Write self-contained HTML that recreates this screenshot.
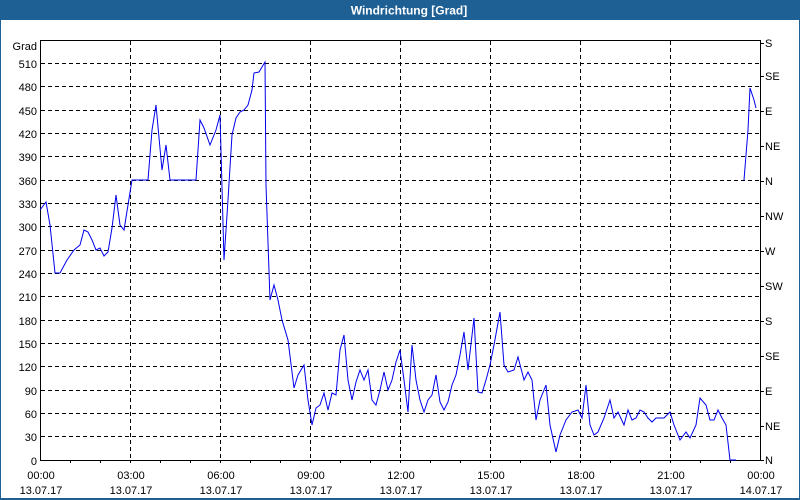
<!DOCTYPE html>
<html><head><meta charset="utf-8"><style>
html,body{margin:0;padding:0;background:#fff;}
body{width:800px;height:500px;overflow:hidden;position:relative;font-family:"Liberation Sans",sans-serif;}
</style></head><body>
<svg width="800" height="500" xmlns="http://www.w3.org/2000/svg" style="position:absolute;left:0;top:0" font-family="Liberation Sans, sans-serif" font-size="11">
<rect x="0" y="0" width="800" height="500" fill="#fff"/>
<rect x="0" y="0" width="800" height="20" fill="#1e5f94"/>
<rect x="0" y="0" width="1" height="500" fill="#1e5f94"/>
<rect x="799" y="0" width="1" height="500" fill="#1e5f94"/>
<rect x="0" y="498" width="800" height="2" fill="#1e5f94"/>
<text x="409" y="14.5" fill="#fff" font-weight="bold" text-anchor="middle" font-size="12">Windrichtung [Grad]</text>
<g stroke="#000" stroke-width="1" stroke-dasharray="4,3" fill="none">
<path d="M130.5 41V460M220.5 41V460M310.5 41V460M400.5 41V460M490.5 41V460M580.5 41V460M670.5 41V460"/>
<path d="M41 63.5H760M41 86.5H760M41 110.5H760M41 133.5H760M41 156.5H760M41 180.5H760M41 203.5H760M41 226.5H760M41 250.5H760M41 273.5H760M41 296.5H760M41 320.5H760M41 343.5H760M41 366.5H760M41 390.5H760M41 413.5H760M41 436.5H760"/>
</g>
<rect x="40.5" y="40.5" width="720" height="420" fill="none" stroke="#000"/>
<g stroke="#000"><path d="M70.5 460v3M100.5 460v3M130.5 460v3M160.5 460v3M190.5 460v3M220.5 460v3M250.5 460v3M280.5 460v3M310.5 460v3M340.5 460v3M370.5 460v3M400.5 460v3M430.5 460v3M460.5 460v3M490.5 460v3M520.5 460v3M550.5 460v3M580.5 460v3M610.5 460v3M640.5 460v3M670.5 460v3M700.5 460v3M730.5 460v3"/>
<path d="M760 43.5h4M760 76.5h4M760 111.5h4M760 146.5h4M760 181.5h4M760 216.5h4M760 251.5h4M760 286.5h4M760 321.5h4M760 356.5h4M760 391.5h4M760 426.5h4M760 460.5h4"/></g>
<g fill="#000" text-anchor="end">
<text x="37" y="50">Grad</text>
<text x="37" y="68">510</text><text x="37" y="91">480</text><text x="37" y="115">450</text><text x="37" y="138">420</text><text x="37" y="161">390</text><text x="37" y="185">360</text><text x="37" y="208">330</text><text x="37" y="231">300</text><text x="37" y="255">270</text><text x="37" y="278">240</text><text x="37" y="301">210</text><text x="37" y="325">180</text><text x="37" y="348">150</text><text x="37" y="371">120</text><text x="37" y="395">90</text><text x="37" y="418">60</text><text x="37" y="441">30</text><text x="37" y="465">0</text>
</g>
<g fill="#000">
<text x="765" y="47">S</text><text x="765" y="80">SE</text><text x="765" y="115">E</text><text x="765" y="150">NE</text><text x="765" y="185">N</text><text x="765" y="220">NW</text><text x="765" y="255">W</text><text x="765" y="290">SW</text><text x="765" y="325">S</text><text x="765" y="360">SE</text><text x="765" y="395">E</text><text x="765" y="430">NE</text><text x="765" y="464">N</text>
</g>
<g fill="#000" text-anchor="middle">
<text x="41" y="479">00:00</text><text x="41" y="494">13.07.17</text>
<text x="131" y="479">03:00</text><text x="131" y="494">13.07.17</text>
<text x="221" y="479">06:00</text><text x="221" y="494">13.07.17</text>
<text x="311" y="479">09:00</text><text x="311" y="494">13.07.17</text>
<text x="401" y="479">12:00</text><text x="401" y="494">13.07.17</text>
<text x="491" y="479">15:00</text><text x="491" y="494">13.07.17</text>
<text x="581" y="479">18:00</text><text x="581" y="494">13.07.17</text>
<text x="671" y="479">21:00</text><text x="671" y="494">13.07.17</text>
<text x="761" y="479">00:00</text><text x="761" y="494">14.07.17</text>
</g>
<g fill="none" stroke="#0000ee" stroke-width="1">
<polyline points="40,210 46,202 50,225 55,273 60,273 67,260 74,250 80,245 84,230 88,232 92,240 96,250 100,248 104,256 108,252 112,228 116,195 120,225 124,230 128,205 132,180 148,180 152,130 156,105 162,170 166,145 170,180 196,180 200,120 204,128 210,145 216,130 220,115 224,260 228,200 232,135 236,118 240,112 244,110 248,105 252,90 254,73 259,72 262,67 265,62 266,185 270,300 274,285 278,300 282,320 288,340 294,388 298,375 304,365 308,400 312,425 316,408 320,405 324,393 328,410 332,393 336,395 340,350 344,335 348,380 352,400 356,382 360,370 364,380 368,370 372,400 376,405 380,390 384,372 388,390 392,380 396,362 400,350 404,380 408,412 412,345 416,380 420,400 424,412 428,400 432,395 436,375 440,402 444,410 448,402 452,385 456,375 460,355 464,332 468,370 474,318 478,392 482,393 486,380 490,365 494,345 500,312 504,365 508,372 514,370 518,357 524,380 528,372 532,380 536,420 540,400 546,385 550,425 556,452 560,435 566,420 572,412 578,410 582,418 586,385 590,425 594,435 598,432 604,418 610,400 614,418 618,412 624,425 628,410 632,420 636,418 640,410 644,412 648,418 652,422 656,418 664,418 670,412 674,425 680,440 686,432 690,438 696,425 700,398 706,405 710,420 714,420 718,410 722,418 726,425 730,460 736,460"/>
<polyline points="744,180 748,130 750,88 754,100 756,108"/>
</g>
</svg>
</body></html>
